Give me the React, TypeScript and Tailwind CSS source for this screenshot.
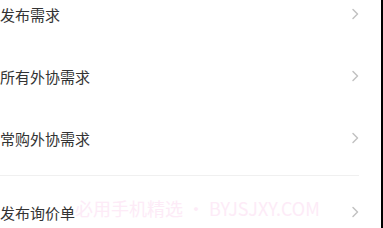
import React from "react";

const Chevron = () => (
  <svg width="9" height="12" viewBox="0 0 9 12" className="shrink-0">
    <polyline points="2,1.5 6.5,6 2,10.5" fill="none" stroke="#c2c2c2" strokeWidth="1.5" strokeLinecap="round" strokeLinejoin="round" />
  </svg>
);

const Row = ({ label, children }: { label: string; children?: React.ReactNode }) => (
  <div className="relative flex h-[62px] items-center justify-between pr-[21px]">
    <span className="text-[15px] leading-none text-[#333333]" style={{ fontFamily: '"Noto Sans CJK SC", "Noto Sans", sans-serif' }}>
      {label}
    </span>
    {children}
    <Chevron />
  </div>
);

export default function App() {
  return (
    <div className="flex h-[228px] w-[383px] overflow-hidden bg-white">
      <div className="w-[381px] overflow-hidden">
        <div className="mt-[-17px] flex flex-col">
          <Row label="发布需求" />
          <Row label="所有外协需求" />
          <Row label="常购外协需求" />
          <div className="mt-[6px] mb-[5px] h-px w-[359px] bg-[#f0f0f0]" />
          <Row label="发布询价单">
            <span
              className="pointer-events-none absolute left-[75px] top-[18px] text-[18px] leading-none text-[#fdebf7]"
              style={{ fontFamily: '"Noto Sans CJK SC", "Liberation Sans", sans-serif' }}
            >
              必用手机精选 • BYJSJXY.COM
            </span>
          </Row>
        </div>
      </div>
      <div className="h-full w-[2px] bg-black" />
    </div>
  );
}
